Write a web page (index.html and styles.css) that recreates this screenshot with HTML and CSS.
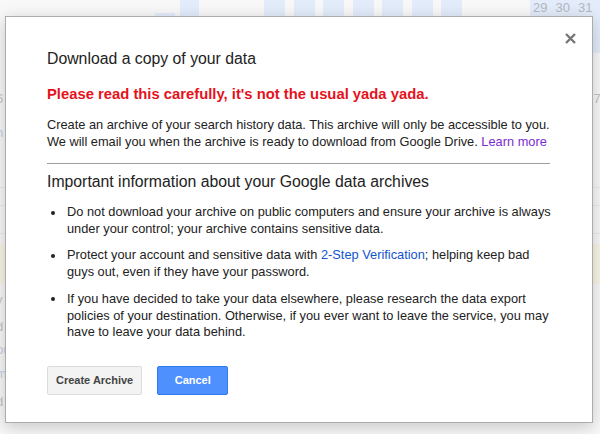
FILE: index.html
```html
<!DOCTYPE html>
<html lang="en">
<head>
<meta charset="utf-8">
<title>Download a copy of your data</title>
<link rel="stylesheet" href="styles.css">
</head>
<body>
<div class="page">
  <header class="bg-top">
    <div class="bars">
      <span class="bar bar-a"></span>
      <span class="bar bar-b"></span>
      <span class="bar bar-c"></span>
      <span class="bar"></span>
      <span class="bar"></span>
      <span class="bar"></span>
      <span class="bar"></span>
      <span class="bar"></span>
      <span class="bar"></span>
    </div>
    <div class="days"><span>29</span><span>30</span><span>31</span></div>
  </header>
  <div class="bg-row r1"><span class="frag">6</span><span class="frag frag-r">75</span></div>
  <div class="bg-row r2"><span class="frag link">n</span><span class="frag frag-r">9</span></div>
  <div class="bg-rule r3"></div>
  <div class="bg-rule r4"></div>
  <div class="bg-rule r5"></div>
  <div class="bg-band"></div>
  <div class="bg-row r6"><span class="frag">y</span></div>
  <div class="bg-row r7"><span class="frag">d</span></div>
  <div class="bg-row r8"><span class="frag link">ou</span></div>
  <div class="bg-row r9"><span class="frag link">m</span></div>
  <div class="bg-row r10"><span class="frag">d</span></div>
</div>

<div class="dialog" role="dialog">
  <button class="close" aria-label="Close">
    <svg width="11" height="11" viewBox="0 0 11 11"><path d="M1 1 L10 10 M10 1 L1 10" stroke="#777" stroke-width="2.4" fill="none"/></svg>
  </button>
  <h1 class="title">Download a copy of your data</h1>
  <p class="warning">Please read this carefully, it's not the usual yada yada.</p>
  <p class="intro">Create an archive of your search history data. This archive will only be accessible to you.<br>We will email you when the archive is ready to download from Google Drive. <a class="visited" href="#">Learn more</a></p>
  <hr class="rule">
  <h2 class="subtitle">Important information about your Google data archives</h2>
  <ul class="info">
    <li>Do not download your archive on public computers and ensure your archive is always<br>under your control; your archive contains sensitive data.</li>
    <li>Protect your account and sensitive data with <a class="link-blue" href="#">2-Step Verification</a>; helping keep bad<br>guys out, even if they have your password.</li>
    <li>If you have decided to take your data elsewhere, please research the data export<br>policies of your destination. Otherwise, if you ever want to leave the service, you may<br>have to leave your data behind.</li>
  </ul>
  <div class="actions">
    <button class="btn btn-default">Create Archive</button>
    <button class="btn btn-primary">Cancel</button>
  </div>
</div>
</body>
</html>
```

FILE: styles.css
```css
html, body {
  margin: 0;
  padding: 0;
}
body {
  width: 600px;
  height: 434px;
  overflow: hidden;
  background: #f8f8f8;
  font-family: "Liberation Sans", Arial, sans-serif;
  position: relative;
}

/* faded background page */
.page {
  display: flex;
  flex-direction: column;
  height: 434px;
}
.bg-top {
  display: flex;
  justify-content: space-between;
  height: 53px;
  flex: none;
}
.bars {
  display: flex;
  padding-left: 155px;
}
.bar {
  width: 21px;
  margin-left: 8.5px;
  background: #e2ecfb;
}
.bar-a {
  width: 20px;
  margin-left: 0;
  margin-top: 13px;
}
.bar-b {
  width: 19px;
  margin-left: 5px;
}
.bar-c {
  margin-left: 65px;
}
.days {
  width: 70px;
  background: #e3ecfa;
  display: flex;
  gap: 8px;
  padding-left: 3px;
  box-sizing: border-box;
  font-size: 13px;
  line-height: 15px;
  color: #b4b8c0;
}
.bg-row {
  display: flex;
  justify-content: space-between;
  height: 12px;
  font-size: 13px;
  line-height: 12px;
  color: #c4c4c4;
  flex: none;
}
.frag {
  margin-left: -4px;
}
.frag-r {
  margin-right: -8px;
}
.frag.link {
  color: #c4cfe6;
}
.r1 { margin-top: 40px; }
.r2 { margin-top: 22px; }
.bg-rule {
  height: 1px;
  background: #ebebeb;
  flex: none;
}
.r3 { margin-top: 48px; }
.r4 { margin-top: 17px; }
.r5 { margin-top: 27px; }
.bg-band {
  height: 40px;
  margin-top: 10px;
  background: #f9f6e6;
  flex: none;
}
.r6 { margin-top: 10px; }
.r7 { margin-top: 15px; }
.r8 { margin-top: 11px; }
.r9 { margin-top: 12px; }
.r10 { margin-top: 16px; }

/* dialog */
.dialog {
  position: absolute;
  left: 5px;
  top: 16px;
  width: 588px;
  height: 407px;
  box-sizing: border-box;
  background: #fff;
  border: 1px solid #acacac;
  box-shadow: 0 4px 16px rgba(0, 0, 0, 0.2);
  padding: 32px 36px 0 41px;
  color: #222;
}
.close {
  position: absolute;
  top: 16px;
  right: 16px;
  width: 11px;
  height: 11px;
  padding: 0;
  border: 0;
  background: none;
  display: block;
}
.close svg {
  display: block;
}
.title {
  margin: 0;
  font-size: 15.8px;
  line-height: 20px;
  font-weight: normal;
  color: #222;
}
.warning {
  margin: 17px 0 0;
  font-size: 14.8px;
  line-height: 17px;
  font-weight: bold;
  color: #e5121c;
}
.intro {
  margin: 13px 0 0;
  font-size: 12.8px;
  line-height: 17px;
  white-space: nowrap;
}
.visited {
  color: #7b2bd1;
  text-decoration: none;
}
.link-blue {
  color: #1155cc;
  text-decoration: none;
}
.rule {
  margin: 13px 6px 0 0;
  border: 0;
  height: 1px;
  background: #9e9e9e;
}
.subtitle {
  margin: 8px 0 0;
  font-size: 15.8px;
  line-height: 20px;
  font-weight: normal;
}
.info {
  list-style: none;
  margin: 12px 0 0;
  padding: 0;
  font-size: 12.8px;
  line-height: 16.7px;
}
.info li {
  padding-left: 20px;
  margin-bottom: 10px;
  white-space: nowrap;
}
.info li:last-child {
  margin-bottom: 0;
}
.info li::before {
  content: "";
  display: inline-block;
  width: 4px;
  height: 4px;
  border-radius: 50%;
  background: #222;
  margin-left: -16px;
  margin-right: 12px;
  vertical-align: middle;
}
.actions {
  display: flex;
  gap: 15px;
  margin-top: 25px;
}
.btn {
  height: 29px;
  min-width: 71px;
  padding: 0 8px;
  box-sizing: border-box;
  border-radius: 2px;
  font-family: "Liberation Sans", Arial, sans-serif;
  font-size: 11px;
  font-weight: bold;
  line-height: 27px;
}
.btn-default {
  background: #f3f3f3;
  border: 1px solid #dcdcdc;
  color: #444;
}
.btn-primary {
  background: #4d90fe;
  border: 1px solid #3079ed;
  color: #fff;
}
```
